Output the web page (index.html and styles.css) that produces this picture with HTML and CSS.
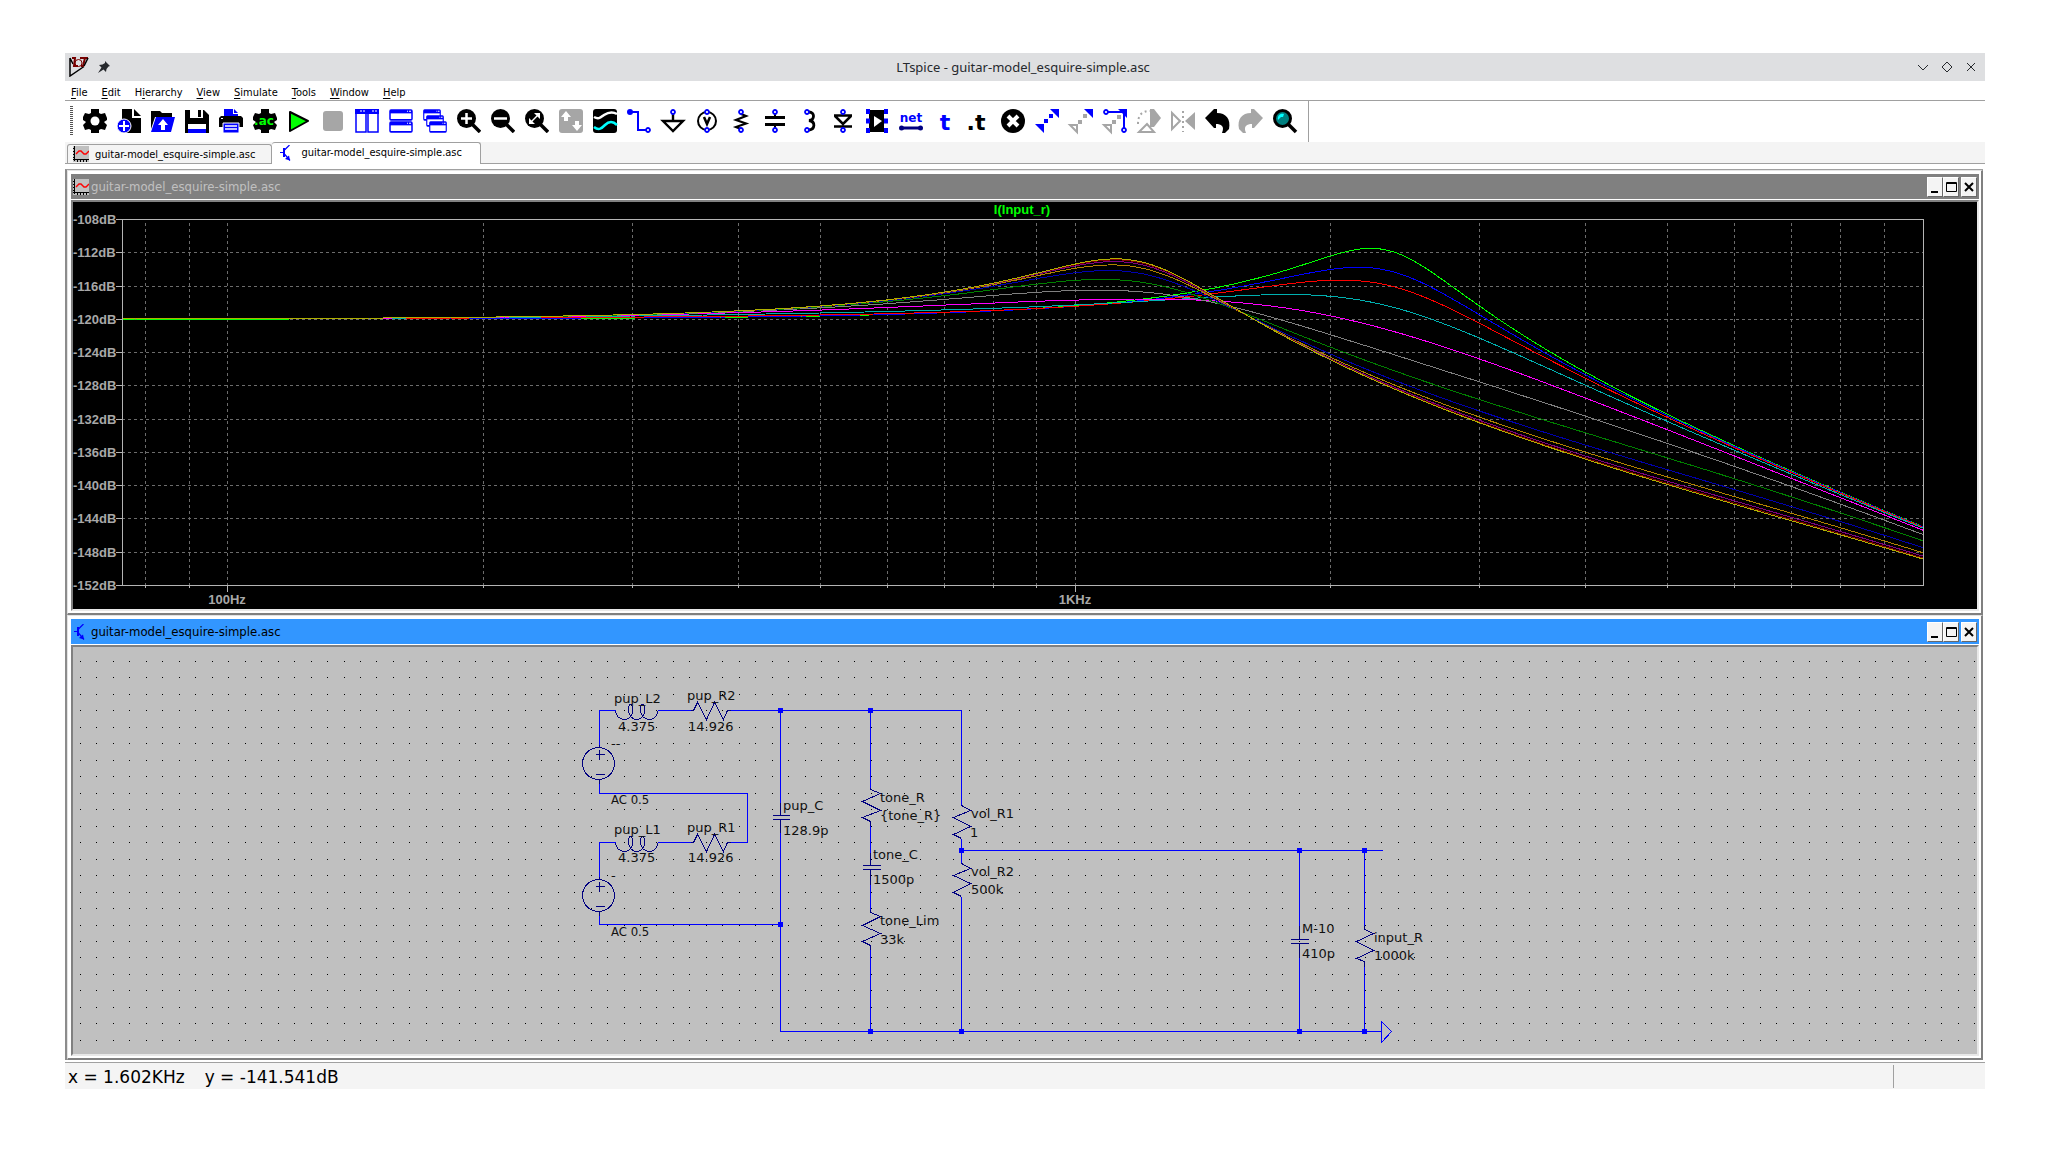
FILE: index.html
```html
<!DOCTYPE html>
<html lang="en">
<head>
<meta charset="utf-8">
<title>LTspice - guitar-model_esquire-simple.asc</title>
<link rel="stylesheet" href="styles.css">
</head>
<body>
<svg width="0" height="0" class="defs" aria-hidden="true">
  <defs>
    <symbol id="i-plot" viewBox="0 0 16 16"><rect width="16" height="16" fill="#c0c0c0"/><path d="M1.500 0v15M0 13.500h16M0 2.500h2M0 5.500h2M0 8.500h2M0 11.500h2M4.500 13v3M7.500 13v3M10.500 13v3M13.500 13v3" stroke="#000" fill="none"/><path d="M3 8l3-3h2l3 3h2l3-3" stroke="#f00" stroke-width="1.400" fill="none"/></symbol>
    <symbol id="i-bjt" viewBox="0 0 16 16"><path d="M1 7.500h5M10.500 0L5 5.500M5 8.500l6 7" stroke="#00f" stroke-width="1.200" fill="none"/><path d="M5 3v9" stroke="#00f" stroke-width="2"/><path d="M11 15.500l-1-5-4 3.500z" fill="#00f"/></symbol>
    <symbol id="i-gear" viewBox="0 0 24 24"><path d="M8 0h8v4l2 1 4-1 2 5v2l-3 2 3 3-2 5-4-1-2 1v3H8v-3l-2-1-4 1-2-5 3-3-3-2V8l2-4 4 1 2-1z"/></symbol>
    <symbol id="i-lens" viewBox="0 0 24 24"><path d="M15 15l8 8" stroke="#000" stroke-width="3.500"/><circle cx="9.500" cy="9.500" r="9.500"/></symbol>
    <symbol id="i-pane" viewBox="0 0 24 11" preserveAspectRatio="none"><rect x="1" y="1" width="22" height="9" rx="1" fill="#fff" stroke="#00f" stroke-width="1.500"/><path d="M1 1h22v3H1z" fill="#00f"/><path d="M18 2h1M20 2h2" stroke="#fff"/></symbol>
    <symbol id="i-pin" viewBox="0 0 6 6"><circle cx="3" cy="3" r="2" fill="#fff" stroke="#00f" stroke-width="1.800"/></symbol>
  </defs>
</svg>

<main class="window">
  <header class="titlebar">
    <div class="title-left">
      <svg width="20" height="20" viewBox="0 0 20 20"><path d="M1 1v18L15 9.500M1 1l3 6" stroke="#000" stroke-width="1.500" fill="none"/><path d="M3 1h3L5 9h4M11 1h8M16 1l-2 8h-2" stroke="#700" stroke-width="2" fill="none"/><circle cx="9.500" cy="6" r="3.500" fill="none" stroke="#700"/><path d="M19 1l-4 8" stroke="#000" stroke-width="1.500"/></svg>
      <svg width="12" height="12" viewBox="0 0 12 12"><path d="M7 0l5 5-1.500.500-2 2.500-.500 3-2.500-2.500L0 12l3.500-5.500L1 4l3.500-.500L7 2z" fill="#26292d"/></svg>
    </div>
    <h1 class="title">LTspice - guitar-model_esquire-simple.asc</h1>
    <div class="title-right">
      <button class="wm" aria-label="Minimize"><svg width="12" height="12" viewBox="0 0 12 12"><path d="M1 4l5 5 5-5"/></svg></button>
      <button class="wm" aria-label="Maximize"><svg width="12" height="12" viewBox="0 0 12 12"><path d="M6 1l5 5-5 5-5-5z"/></svg></button>
      <button class="wm" aria-label="Close"><svg width="12" height="12" viewBox="0 0 12 12"><path d="M2 2l8 8M10 2l-8 8"/></svg></button>
    </div>
  </header>

  <nav class="menubar">
    <button><u>F</u>ile</button><button><u>E</u>dit</button><button>H<u>i</u>erarchy</button><button><u>V</u>iew</button><button><u>S</u>imulate</button><button><u>T</u>ools</button><button><u>W</u>indow</button><button><u>H</u>elp</button>
  </nav>

  <div class="toolbar" role="toolbar">
    <span class="grip"></span>
    <button aria-label="Settings"><svg viewBox="0 0 24 24"><use href="#i-gear"/><circle cx="12" cy="12" r="4.500" fill="#fff"/></svg></button>
    <button aria-label="New schematic"><svg viewBox="0 0 24 24"><path d="M5 0h10v9h9v15H5z"/><path d="M17 0l7 7h-7z"/><circle cx="7" cy="17" r="7" fill="#00f" stroke="#fff"/><path d="M7 12v10M2 17h10" stroke="#fff" stroke-width="2"/></svg></button>
    <button aria-label="Open"><svg viewBox="0 0 24 24"><path d="M0 2h9l2 2h10v4H4L0 20z"/><path d="M5 8h19l-4 15H0z" fill="#00f"/><path d="M12 10l5 6h-3v5h-4v-5H7z" fill="#fff"/></svg></button>
    <button aria-label="Save"><svg viewBox="0 0 24 24"><path d="M0 1h19l5 5v18H0z"/><path d="M5 1h13v8H5z" fill="#fff"/><path d="M13 1h3v7h-3z"/><path d="M3 15h18v5H3z" fill="#fff"/><path d="M3 20h18v4H3z" fill="#00f"/></svg></button>
    <button aria-label="Print"><svg viewBox="0 0 24 24"><path d="M5 0h9v5h5v3H5z" fill="#00f"/><path d="M15 0l4 4h-4z" fill="#00f"/><path d="M2 7h20l2 2v9H0V9z"/><path d="M2 9h2v1H2z" fill="#fff"/><path d="M4 14h16v10H4z" fill="#00f" stroke="#fff"/><path d="M6 17h12M6 20h12" stroke="#fff" stroke-width="1.500"/></svg></button>
    <button aria-label="Configure analysis"><svg viewBox="0 0 24 24"><use href="#i-gear"/><text x="11" y="16" text-anchor="middle" class="ico-ac">.ac</text></svg></button>
    <button aria-label="Run"><svg viewBox="0 0 24 24"><path d="M3 3l18 9-18 10z" fill="#0f0" stroke="#000" stroke-width="2" stroke-linejoin="round"/></svg></button>
    <button aria-label="Stop"><svg viewBox="0 0 24 24"><rect x="2" y="2" width="20" height="20" rx="3" fill="#a6a6a6"/></svg></button>
    <button aria-label="Tile vertically"><svg viewBox="0 0 24 24"><path d="M1 2h10v21H1zM13 2h10v21H13z" fill="#fff" stroke="#00f" stroke-width="1.500"/><path d="M0 0h24v5H0z" fill="#00f"/><path d="M5 2h2M8 2h2M17 2h2M20 2h2" stroke="#fff"/></svg></button>
    <button aria-label="Tile horizontally"><svg viewBox="0 0 24 24"><use href="#i-pane" width="24" height="12"/><use href="#i-pane" y="12" width="24" height="12"/></svg></button>
    <button aria-label="Cascade"><svg viewBox="0 0 24 24"><use href="#i-pane" width="18" height="12"/><use href="#i-pane" x="3" y="6" width="18" height="12"/><use href="#i-pane" x="6" y="12" width="18" height="12"/></svg></button>
    <button aria-label="Zoom in"><svg viewBox="0 0 24 24"><use href="#i-lens"/><path d="M9.500 4v11M4 9.500h11" stroke="#fff" stroke-width="2.500"/></svg></button>
    <button aria-label="Zoom out"><svg viewBox="0 0 24 24"><use href="#i-lens"/><path d="M3 9.500h13" stroke="#fff" stroke-width="2.500"/></svg></button>
    <button aria-label="Zoom to fit"><svg viewBox="0 0 24 24"><use href="#i-lens"/><path d="M5 14l9-9" stroke="#fff" stroke-width="1.500"/><path d="M9 4h6v6zM4 9v6h6z" fill="#fff"/></svg></button>
    <button aria-label="Autorange"><svg viewBox="0 0 24 24"><rect width="24" height="24" rx="3" fill="#a6a6a6"/><path d="M7 2l5 6H9v4H5V8H2zM18 22l-5-6h3v-4h4v4h3z" fill="#fff"/></svg></button>
    <button aria-label="Pick visible traces"><svg viewBox="0 0 24 24"><rect width="24" height="24" rx="3"/><path d="M1 8c5 3 7 0 10-2s8-4 13-1" stroke="#fff" stroke-width="2.500" fill="none"/><path d="M1 18c5 4 8 1 11-2s7-5 12 0" stroke="#0ff" stroke-width="2.500" fill="none"/></svg></button>
    <button aria-label="Wire"><svg viewBox="0 0 24 24"><path d="M3 3h8v18h9" stroke="#00f" stroke-width="2" fill="none"/><circle cx="3" cy="3" r="3" fill="#00f"/><use href="#i-pin" x="18" y="18" width="6" height="6"/></svg></button>
    <button aria-label="Ground"><svg viewBox="0 0 24 24"><path d="M12 5v7M2 12h20L12 22z" stroke="#000" stroke-width="2.400" fill="none"/><use href="#i-pin" x="9" y="0" width="6" height="6"/></svg></button>
    <button aria-label="Voltage source"><svg viewBox="0 0 24 24"><circle cx="12" cy="12" r="9" fill="none" stroke="#000" stroke-width="2"/><path d="M9 8l3 7 3-7" fill="none" stroke="#000" stroke-width="2.500"/><use href="#i-pin" x="9" y="0" width="6" height="6"/><use href="#i-pin" x="9" y="18" width="6" height="6"/></svg></button>
    <button aria-label="Resistor"><svg viewBox="0 0 24 24"><path d="M12 5l5 2-10 4 10 3.500L7 18l5 2" fill="none" stroke="#000" stroke-width="2.200"/><use href="#i-pin" x="9" y="0" width="6" height="6"/><use href="#i-pin" x="9" y="18" width="6" height="6"/></svg></button>
    <button aria-label="Capacitor"><svg viewBox="0 0 24 24"><path d="M2 8.500h20M2 15.500h20" stroke="#000" stroke-width="3"/><path d="M12 5v3M12 16v3" stroke="#000" stroke-width="2"/><use href="#i-pin" x="9" y="0" width="6" height="6"/><use href="#i-pin" x="9" y="18" width="6" height="6"/></svg></button>
    <button aria-label="Inductor"><svg viewBox="0 0 24 24"><path d="M12 3c6 0 6 8 0 8.500 7 1 6 9 0 9.500" fill="none" stroke="#000" stroke-width="2.800"/><use href="#i-pin" x="7" y="0" width="6" height="6"/><use href="#i-pin" x="7" y="18" width="6" height="6"/></svg></button>
    <button aria-label="Diode"><svg viewBox="0 0 24 24"><path d="M3 6.500h18M4 7l8 8 8-8M3 17.500h18" fill="none" stroke="#000" stroke-width="2.500"/><use href="#i-pin" x="9" y="0" width="6" height="6"/><use href="#i-pin" x="9" y="18" width="6" height="6"/></svg></button>
    <button aria-label="Component"><svg viewBox="0 0 24 24"><path d="M4 1h15v22H4z"/><path d="M9 7l8 5-8 6z" fill="#fff"/><path d="M3 0v24M21 0v24" stroke="#00f" stroke-width="4" stroke-dasharray="5 4.500"/></svg></button>
    <button aria-label="Net label"><svg viewBox="0 0 24 24"><text x="12" y="13" text-anchor="middle" class="ico-net">net</text><path d="M2 19h20" stroke="#000080" stroke-width="3"/><circle cx="2.500" cy="19" r="2.500" fill="#000080"/><circle cx="21.500" cy="19" r="2.500" fill="#000080"/></svg></button>
    <button aria-label="Text"><svg viewBox="0 0 24 24"><text x="12" y="21" text-anchor="middle" class="ico-t ico-blue">t</text></svg></button>
    <button aria-label="SPICE directive"><svg viewBox="0 0 24 24"><text x="9" y="21" text-anchor="middle" class="ico-t">.t</text></svg></button>
    <button aria-label="Delete"><svg viewBox="0 0 24 24"><circle cx="12" cy="12" r="12"/><path d="M7 7l10 10M17 7L7 17" stroke="#fff" stroke-width="4"/></svg></button>
    <button aria-label="Duplicate"><svg viewBox="0 0 24 24"><path d="M15 0h9v9zM0 15h9v9z" fill="#00f"/><path d="M9 14h4v-4h-4zM14 9h4V5h-4z" fill="#00f" /></svg></button>
    <button aria-label="Move"><svg viewBox="0 0 24 24"><path d="M15 0h9v9z" fill="#00f"/><path d="M1 16h7v7z" fill="#fff" stroke="#a6a6a6" stroke-width="2"/><path d="M9 15h4v-4H9zM14 9h4V5h-4z" fill="#a6a6a6"/></svg></button>
    <button aria-label="Drag"><svg viewBox="0 0 24 24"><path d="M15 0h9v9z" fill="#00f"/><path d="M5 3h16v16" stroke="#00f" stroke-width="2" fill="none"/><path d="M1 16h7v7z" fill="#fff" stroke="#a6a6a6" stroke-width="2"/><path d="M9 15h4v-4H9zM14 10h4V6h-4z" fill="#a6a6a6"/><use href="#i-pin" width="6" height="6"/><use href="#i-pin" x="18" y="18" width="6" height="6"/></svg></button>
    <button aria-label="Rotate"><svg viewBox="0 0 24 24"><path d="M13 0h4l7 9-7 9h-4z" fill="#a6a6a6"/><path d="M2 23l8-8 7 8z" fill="#fff" stroke="#a6a6a6" stroke-width="2"/><path d="M1 15c0-8 3-13 12-13" fill="none" stroke="#a6a6a6" stroke-width="2" stroke-dasharray="2 3"/></svg></button>
    <button aria-label="Mirror"><svg viewBox="0 0 24 24"><path d="M24 3v18l-10-9z" fill="#a6a6a6"/><path d="M1 4v16l8-8z" fill="#fff" stroke="#a6a6a6" stroke-width="2"/><path d="M12 2v21" stroke="#a6a6a6" stroke-width="2" stroke-dasharray="2 3"/></svg></button>
    <button aria-label="Undo"><svg viewBox="0 0 24 24"><path d="M0 9l9-9h3v4c9 0 14 6 12 16l-4 4h-3c3-7-1-9-6-9v4H9z"/></svg></button>
    <button aria-label="Redo"><svg viewBox="0 0 24 24"><path d="M24 9l-9-9h-3v4C3 4-2 10 0 20l4 4h3c-3-7 1-9 6-9v4h2z" fill="#a6a6a6"/></svg></button>
    <button aria-label="Find"><svg viewBox="0 0 24 24"><path d="M15 15l8 8" stroke="#000" stroke-width="3.500"/><circle cx="9.500" cy="9.500" r="8" fill="#008080" stroke="#000" stroke-width="3"/><path d="M5 11c-1-4 2-7 6-6l-1 3-2 0z" fill="#0ff"/></svg></button>
  </div>

  <div class="tabs" role="tablist">
    <button class="tab" role="tab"><svg width="16" height="16"><use href="#i-plot"/></svg>guitar-model_esquire-simple.asc</button>
    <button class="tab tab-active" role="tab" aria-selected="true"><svg width="16" height="16"><use href="#i-bjt"/></svg>guitar-model_esquire-simple.asc</button>
  </div>

  <div class="mdi">
    <section class="child">
      <header class="child-bar">
        <svg width="16" height="16"><use href="#i-plot"/></svg>
        <h2>guitar-model_esquire-simple.asc</h2>
        <button aria-label="Minimize"><svg width="11" height="12" viewBox="0 0 11 12"><path d="M1 11h7"/></svg></button>
        <button aria-label="Maximize"><svg width="11" height="12" viewBox="0 0 11 12"><path d="M1 2h9" /><path class="thin" d="M.500 1.500h10v9H.500z"/></svg></button>
        <button class="apart" aria-label="Close"><svg width="11" height="12" viewBox="0 0 11 12"><path d="M1 2l8 8M9 2l-8 8"/></svg></button>
      </header>
      <div class="view view-plot"><svg id="plot" role="img" aria-label="Frequency response of I(Input_r)"></svg></div>
    </section>

    <section class="child">
      <header class="child-bar child-bar-active">
        <svg width="16" height="16"><use href="#i-bjt"/></svg>
        <h2>guitar-model_esquire-simple.asc</h2>
        <button aria-label="Minimize"><svg width="11" height="12" viewBox="0 0 11 12"><path d="M1 11h7"/></svg></button>
        <button aria-label="Maximize"><svg width="11" height="12" viewBox="0 0 11 12"><path d="M1 2h9" /><path class="thin" d="M.500 1.500h10v9H.500z"/></svg></button>
        <button class="apart" aria-label="Close"><svg width="11" height="12" viewBox="0 0 11 12"><path d="M1 2l8 8M9 2l-8 8"/></svg></button>
      </header>
      <div class="view view-schematic">
        <svg id="schematic" role="img" aria-label="Schematic">
          <path id="dots" fill="#000" shape-rendering="crispEdges"/>
          <g transform="translate(.5 .5)">
            <g class="wire">
              <path d="M526 100V63h16M584 63h33M657 63h231v95M526 132v14h148v49h-17M617 195h-33M542 195h-16v37M526 264v13h181"/>
              <path d="M707 63v92M707 185v199h601M797 63v77M797 178v27M797 237v25M797 302v82M888 191v25M888 249v135M888 203h421M1226 203v75M1226 310v74M1291 203v75M1291 319v65"/>
              <path class="flag" d="M1308 374v21l10-11z"/>
            </g>
            <g class="part">
              <path d="M542 63c0 5 4 9 9 9c6 0 9-6 8-11c0-3-1-4-2-4c-2 0-2 3-2 6c0 5 4 9 8 9c6 0 9-6 8-11c0-3-1-4-2-4c-2 0-2 3-2 6c0 5 4 9 9 9c5 0 8-4 8-9"/>
              <path d="M542 195c0 5 4 9 9 9c6 0 9-6 8-11c0-3-1-4-2-4c-2 0-2 3-2 6c0 5 4 9 8 9c6 0 9-6 8-11c0-3-1-4-2-4c-2 0-2 3-2 6c0 5 4 9 9 9c5 0 8-4 8-9"/>
              <path d="M617 63h3l4-8 9 17 8-17 9 17 4-9h3"/>
              <path d="M617 195h3l4-8 9 17 8-17 9 17 4-9h3"/>
              <circle cx="525" cy="116" r="16"/><path d="M526 97v3M526 132v4M522 107h9M526 102v10M522 127h9"/>
              <circle cx="525" cy="248" r="16"/><path d="M526 229v3M526 264v4M522 239h9M526 234v10M522 259h9"/>
              <path d="M707 155v13M699 168h17M699 172h17M707 172v13"/>
              <path d="M797 140v2l10 4-18 8 18 9-18 7 8 4v4"/>
              <path d="M797 205v13M789 218h18M789 222h18M797 222v15"/>
              <path d="M797 262v3l10 4-18 9 18 8-18 8 8 4v4"/>
              <path d="M888 158l9 5-17 7 17 9-17 8 8 4"/>
              <path d="M888 216l9 5-17 7 17 8-17 9 8 4"/>
              <path d="M1226 278v14M1217 292h18M1217 296h18M1226 296v14"/>
              <path d="M1291 278v4l9 4-17 8 17 9-17 8 8 3v5"/>
            </g>
          </g>
          <path class="node" d="M705 61h5v5h-5zM795 61h5v5h-5zM886 201h5v5h-5zM705 275h5v5h-5zM795 382h5v5h-5zM886 382h5v5h-5zM1224 201h5v5h-5zM1289 201h5v5h-5zM1224 382h5v5h-5zM1289 382h5v5h-5z"/>
          <g class="label">
            <text x="541" y="56">pup_L2</text><text x="545" y="84">4.375</text>
            <text x="614" y="53">pup_R2</text><text x="615" y="84">14.926</text>
            <text x="538" y="101">--</text><text x="538" y="157" class="narrow">AC 0.5</text>
            <text x="541" y="187">pup_L1</text><text x="545" y="215">4.375</text>
            <text x="614" y="185">pup_R1</text><text x="615" y="215">14.926</text>
            <text x="538" y="233">-</text><text x="538" y="289" class="narrow">AC 0.5</text>
            <text x="710" y="163">pup_C</text><text x="710" y="188">128.9p</text>
            <text x="807" y="155">tone_R</text><text x="807" y="173">{tone_R}</text>
            <text x="800" y="212">tone_C</text><text x="800" y="237">1500p</text>
            <text x="807" y="278">tone_Lim</text><text x="807" y="297">33k</text>
            <text x="898" y="171">vol_R1</text><text x="897" y="190">1</text>
            <text x="898" y="229">vol_R2</text><text x="898" y="247">500k</text>
            <text x="1229" y="286">M-10</text><text x="1229" y="311">410p</text>
            <text x="1301" y="295">input_R</text><text x="1301" y="313">1000k</text>
          </g>
        </svg>
      </div>
    </section>
  </div>

  <footer class="status"><span>x = 1.602KHz</span><span>y = -141.541dB</span><span class="status-cell"></span></footer>
</main>
<script src="app.js"></script>
</body>
</html>
```
FILE: styles.css
```css
* { box-sizing: border-box; }
body {
  margin: 0;
  padding: 53px 65px;
  background: #fff;
  color: #000;
  font-family: "DejaVu Sans Condensed", "DejaVu Sans", sans-serif;
  font-stretch: condensed;
  font-size: 11px;
}
h1, h2 { margin: 0; font-weight: normal; }
button {
  margin: 0;
  padding: 0;
  border: 0;
  background: none;
  color: inherit;
  font: inherit;
}
svg { display: block; flex: none; }
.defs { position: absolute; }
.window { display: flex; flex-direction: column; }

.titlebar {
  display: grid;
  grid-template-columns: 1fr auto 1fr;
  align-items: center;
  height: 28px;
  padding: 0 8px 0 4px;
  background: #dedfe1;
}
.title-left { display: flex; align-items: center; gap: 9px; }
.title { font: 13px "Noto Sans", sans-serif; color: #26292d; }
.title-right { display: flex; justify-content: flex-end; gap: 12px; }
.wm svg { fill: none; stroke: #26292d; stroke-width: 1; }

.menubar {
  display: flex;
  gap: 14px;
  height: 20px;
  padding: 3px 6px 0;
  border-bottom: 1px solid #a0a0a0;
}
.menubar u { text-underline-offset: 2px; }

.toolbar {
  display: flex;
  align-items: center;
  gap: 10px;
  height: 41px;
  width: max-content;
  padding: 0 11px 1px 5px;
  border-right: 1px solid #a0a0a0;
}
.toolbar svg { width: 24px; height: 24px; overflow: visible; }
.grip {
  width: 3px;
  height: 30px;
  background: repeating-linear-gradient(#555 0 1px, #fff 1px 2px);
}
.ico-ac { font: bold 12px "DejaVu Sans", sans-serif; fill: #0f0; }
.ico-net { font: bold 12px "DejaVu Sans", sans-serif; fill: #00f; }
.ico-t { font: bold 22px "DejaVu Sans", sans-serif; fill: #000; }
.ico-blue { fill: #00f; }

.tabs {
  display: flex;
  align-items: flex-end;
  height: 22px;
  padding-left: 2px;
  background: #f4f4f4;
  border-bottom: 1px solid #a0a0a0;
}
.tab {
  display: flex;
  align-items: center;
  gap: 6px;
  height: 19px;
  padding: 0 16px 0 5px;
  border: 1px solid #a0a0a0;
  border-bottom: 0;
  border-radius: 3px 3px 0 0;
}
.tab-active {
  height: 22px;
  margin-bottom: -1px;
  padding: 0 18px 2px 7px;
  border-left: 0;
  background: #fff;
}

.mdi {
  margin: 5px 2px 2px 0;
  border-top: 1px solid #a0a0a0;
  border-left: 2px solid #8c8c8c;
}
.child {
  padding: 3px 2px 2px 3px;
  border: solid;
  border-width: 1px 2px 2px 1px;
  border-color: #e3e3e3 #808080 #808080 #e3e3e3;
}
.child-bar {
  display: flex;
  align-items: center;
  height: 25px;
  margin-bottom: 1px;
  padding: 0 2px;
  background: #808080;
  color: #c0c0c0;
}
.child-bar-active { background: #3296ff; color: #000; }
.child-bar h2 { flex: 1; padding-left: 2px; font-size: 13px; }
.child-bar button {
  display: flex;
  align-items: center;
  justify-content: center;
  width: 16px;
  height: 20px;
  background: #f4f4f4;
  border: solid;
  border-width: 1px;
  border-color: #fff #696969 #696969 #fff;
}
.child-bar button.apart { margin-left: 2px; }
.child-bar button path { fill: none; stroke: #000; stroke-width: 2; }
.child-bar button .thin { stroke-width: 1; }

.view {
  border: solid;
  border-width: 2px;
  border-color: #808080 #e8e8e8 #e8e8e8 #808080;
}
.view svg { width: 100%; height: 407px; }
.view-plot { background: #000; }
.view-schematic { background: #c0c0c0; }

#plot text { font: bold 13px "Liberation Sans", Arial, sans-serif; fill: #a8a8a8; }
#plot .trace-name { fill: #0f0; }
#plot path { fill: none; shape-rendering: crispEdges; }
#plot .grid { stroke: #6c6c6c; stroke-dasharray: 3 3; }
#plot .axis { stroke: #b4b4b4; }

.wire path, .part path, .part circle { fill: none; stroke-width: 1; }
.wire { stroke: #00f; }
.part { stroke: #000080; }
.wire, .part { shape-rendering: crispEdges; }
.node { fill: #00f; }
.label { font: 13px "DejaVu Sans", sans-serif; fill: #111; }
.label .narrow { font: 13px "DejaVu Sans Condensed", "DejaVu Sans", sans-serif; font-stretch: condensed; }

.status {
  display: flex;
  align-items: center;
  gap: 20px;
  height: 27px;
  padding: 2px 0 1px 3px;
  border-top: 1px solid #a0a0a0;
  background: #f4f4f4;
  font: 17px "DejaVu Sans", sans-serif;
}
.status-cell {
  align-self: stretch;
  width: 92px;
  margin-left: auto;
  border-left: 1px solid #a0a0a0;
}
```
FILE: app.js
```js
// AC sweep of the pickup, tone and volume network, stepped over tone_R.
var STEPS = [
  [Infinity, '#00ff00'], [1e6, '#0000ff'], [500e3, '#ff0000'], [250e3, '#00b0b0'],
  [125e3, '#ff00ff'], [61e3, '#808080'], [30.5e3, '#008000'], [15e3, '#0000b0'],
  [7.5e3, '#b08000'], [3.7e3, '#800080'], [1.8e3, '#800000'], [800, '#b0b000']
];
var F_MIN = 75, F_MAX = 1e4, DB_MAX = -108, DB_MIN = -152;

function responseDb(f, toneR) {
  var w = 2 * Math.PI * f;
  var rs = 2 * 14.926, xl = w * 2 * 4.375;
  var g = 1 / 500e3 + 1 / 1e6, b = w * (128.9e-12 + 410e-12);
  if (isFinite(toneR)) {
    var r = toneR + 33e3, xc = 1 / (w * 1500e-12), m = r * r + xc * xc;
    g += r / m;
    b += xc / m;
  }
  var re = 1 + rs * g - xl * b, im = rs * b + xl * g;
  return -120 - 10 * Math.log10(re * re + im * im);
}

function drawPlot() {
  var svg = document.getElementById('plot');
  var width = svg.clientWidth;
  var left = 49, right = width - 54, top = 17, bottom = 383;
  function px(f) { return left + (right - left) * Math.log(f / F_MIN) / Math.log(F_MAX / F_MIN); }
  function py(db) { return top + (bottom - top) * (DB_MAX - db) / (DB_MAX - DB_MIN); }
  var grid = '', axis = '', text = '', traces = '', db, f, x, y;

  for (db = DB_MAX; db >= DB_MIN; db -= 4) {
    y = Math.round(py(db)) + 0.5;
    axis += 'M' + (left - 6) + ' ' + y + 'h6';
    if (db < DB_MAX && db > DB_MIN) grid += 'M' + left + ' ' + y + 'H' + right;
    text += '<text x="0" y="' + (Math.round(y) + 4) + '">' + db + 'dB</text>';
  }
  for (var decade = 10; decade < F_MAX; decade *= 10) {
    for (var n = 1; n < 10; n++) {
      f = decade * n;
      if (f <= F_MIN) continue;
      x = Math.floor(px(f)) + 0.5;
      grid += 'M' + x + ' ' + (top + 4) + 'V' + bottom;
      axis += 'M' + x + ' ' + bottom + 'v' + (n === 1 ? 7 : 3);
      if (n === 1) text += '<text text-anchor="middle" x="' + Math.floor(x) + '" y="402">' + (f < 1000 ? f + 'Hz' : f / 1000 + 'KHz') + '</text>';
    }
  }
  axis += 'M' + (left + 0.5) + ' ' + (top + 0.5) + 'H' + (right + 0.5) + 'V' + (bottom + 0.5) + 'H' + (left + 0.5) + 'z';
  STEPS.forEach(function (step) {
    var d = '';
    for (var k = 0; k <= 400; k++) {
      f = F_MIN * Math.pow(F_MAX / F_MIN, k / 400);
      d += (k ? 'L' : 'M') + px(f).toFixed(1) + ' ' + (py(responseDb(f, step[0])) + 0.3).toFixed(1);
    }
    traces += '<path d="' + d + '" stroke="' + step[1] + '"/>';
  });
  text += '<text class="trace-name" text-anchor="middle" x="' + Math.floor((left + right) / 2) + '" y="12">I(Input_r)</text>';
  svg.innerHTML = '<path class="grid" d="' + grid + '"/>' + traces + '<path class="axis" d="' + axis + '"/>' + text;
}

function drawDots() {
  var svg = document.getElementById('schematic');
  var pitch = 16.47, d = '';
  for (var j = 0; 14 + j * pitch < 400; j++) {
    for (var i = 0; 7 + i * pitch < svg.clientWidth; i++) {
      d += 'M' + Math.round(7 + i * pitch) + ' ' + Math.round(14 + j * pitch) + 'h1v1h-1z';
    }
  }
  document.getElementById('dots').setAttribute('d', d);
}

function draw() { drawPlot(); drawDots(); }
window.addEventListener('resize', draw);
draw();
```
